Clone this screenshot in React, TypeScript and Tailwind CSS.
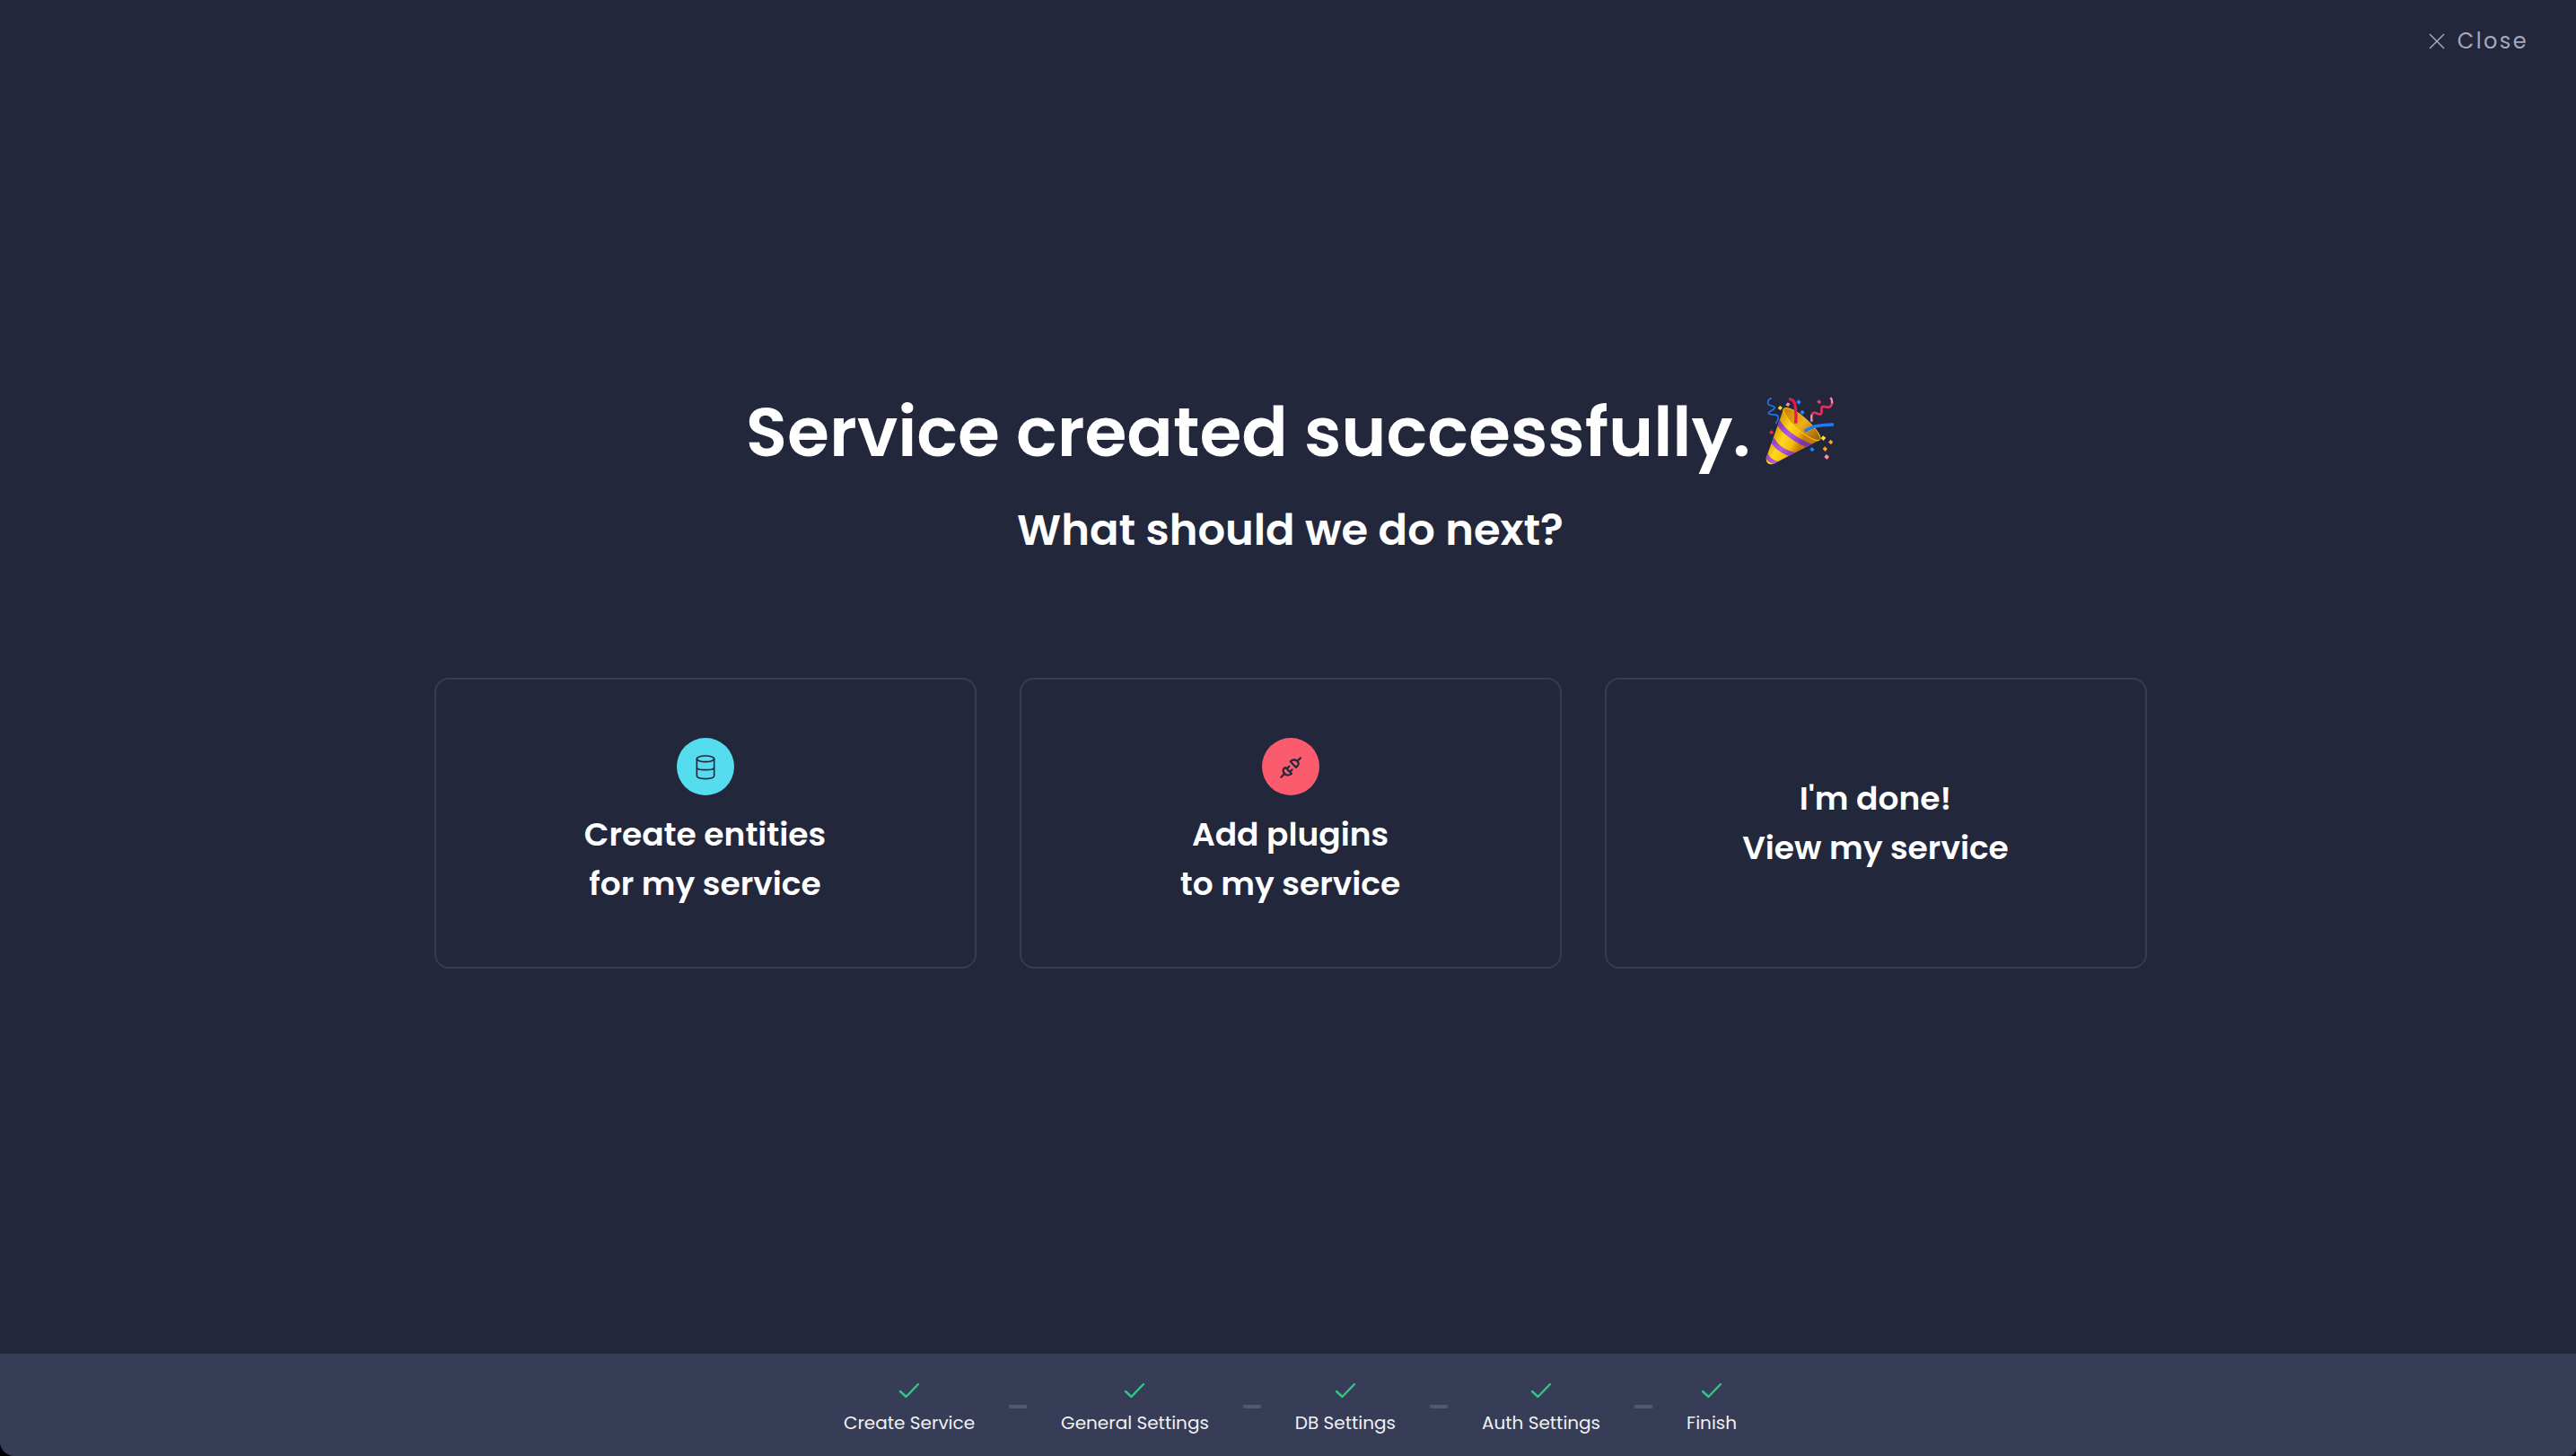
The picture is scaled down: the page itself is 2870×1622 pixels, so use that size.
import React from "react";

function PartyPopper() {
  return (
    <svg role="img" aria-label="Party popper" viewBox="84 63 234 240" className="h-20 w-[78px] shrink-0" fill="none">
      <defs>
        <linearGradient id="cone" x1="105" y1="190" x2="195" y2="240" gradientUnits="userSpaceOnUse">
          <stop offset="0" stopColor="#d99a05" />
          <stop offset="0.4" stopColor="#ffd91a" />
          <stop offset="0.75" stopColor="#f6bd0e" />
          <stop offset="1" stopColor="#c57c05" />
        </linearGradient>
        <linearGradient id="stripe" x1="105" y1="190" x2="195" y2="240" gradientUnits="userSpaceOnUse">
          <stop offset="0" stopColor="#8136b4" />
          <stop offset="0.5" stopColor="#b45ce0" />
          <stop offset="1" stopColor="#7e35aa" />
        </linearGradient>
        <linearGradient id="mouth" x1="150" y1="105" x2="265" y2="205" gradientUnits="userSpaceOnUse">
          <stop offset="0" stopColor="#c98206" />
          <stop offset="0.5" stopColor="#eeb019" />
          <stop offset="1" stopColor="#9c5d08" />
        </linearGradient>
        <clipPath id="coneClip">
          <path d="M147 104 L89 268 Q88 289 108 289 L114 287 L268 208 Q212 190 147 104Z" />
        </clipPath>
      </defs>
      <path d="M147 104 L89 268 Q88 289 108 289 L114 287 L268 208 Q212 190 147 104Z" fill="url(#cone)" />
      <g clipPath="url(#coneClip)" stroke="url(#stripe)">
        <path d="M128 146 Q158 198 246 232" strokeWidth="17" />
        <path d="M108 203 Q128 244 186 258" strokeWidth="17" />
        <path d="M88 254 Q98 280 130 286" strokeWidth="14" />
      </g>
      <path d="M149 102 C163 94 205 118 236 151 C266 181 276 203 267 208 C256 214 212 191 183 160 C155 131 141 108 149 102Z" fill="url(#mouth)" stroke="#ffcf1f" strokeWidth="3" />
      <path d="M165 71 Q184 70 187 97 Q190 120 188 152" stroke="#e5194f" strokeWidth="10" />
      <path d="M218 178 Q240 162 270 159 Q290 156 315 156" stroke="#1f7cf2" strokeWidth="10" />
      <path d="M108 68 C95 70 91 84 99 91 C108 95 119 93 118 100 C115 110 94 111 97 119 C104 126 119 119 127 126 C135 133 126 144 121 153" stroke="#1b76ea" strokeWidth="5" />
      <path d="M304 66 C314 80 309 96 299 98 C290 100 284 92 276 97 C270 104 280 115 271 121 C262 125 252 111 245 118 C239 126 243 136 243 146" stroke="#e5305f" strokeWidth="8" />
      <path d="M305 66 Q312 76 308 85 M241 123 Q239 134 241 146" stroke="#ff9ab8" strokeWidth="5" />
      <g>
        <path d="M135 93 L144 99 L137 108 L128 101Z" fill="#ffe01d" />
        <path d="M161 82 L170 87 L163 96 L154 91Z" fill="#ff86ae" />
        <path d="M197 72 L206 80 L199 89 L190 81Z" fill="#168cff" />
        <path d="M209 107 L218 114 L211 123 L202 116Z" fill="#168cff" />
        <path d="M265 72 L274 80 L267 88 L258 80Z" fill="#e63767" />
        <path d="M106 174 L115 182 L107 190 L99 182Z" fill="#e42752" />
        <path d="M279 193 L289 200 L281 210 L272 202Z" fill="#ffe02a" />
        <path d="M304 206 L313 214 L306 223 L297 215Z" fill="#ff9e1b" />
        <path d="M285 229 L294 237 L287 246 L278 238Z" fill="#ffa20f" />
        <path d="M242 231 L251 239 L243 247 L235 239Z" fill="#168cff" />
        <path d="M290 255 L300 263 L293 273 L283 265Z" fill="#ff8db0" />
      </g>
    </svg>
  );
}

function DatabaseIcon() {
  return (
    <svg viewBox="102 66 192 192" className="size-16" fill="none" stroke="#22273c" strokeWidth="5" aria-hidden="true">
      <ellipse cx="198" cy="136" rx="29" ry="10" />
      <path d="M169 136 V193 C169 206 227 206 227 193 V136 M169 164 C169 176 227 176 227 164" />
    </svg>
  );
}

function PlugIcon() {
  return (
    <svg viewBox="108 66 192 192" className="size-16" fill="none" stroke="#22273c" strokeWidth="6.5" strokeLinecap="round" strokeLinejoin="round" aria-hidden="true">
      <path d="M172 197 L181 188 M187 165 L207 186 Q198 193 188 189 Q179 185 179 175 Q179 168 187 165Z" />
      <path d="M194 166 L199 161 M204 177 L209 172" />
      <path d="M237 133 L228 142 M203 145 L222 165 Q231 158 230 150 Q227 141 217 139 Q208 139 203 145Z" />
    </svg>
  );
}

const cards = [
  { lines: ["Create entities", "for my service"], icon: <DatabaseIcon />, tint: "bg-[#55dcee]" },
  { lines: ["Add plugins", "to my service"], icon: <PlugIcon />, tint: "bg-[#fa5c6e]" },
  { lines: ["I'm done!", "View my service"], icon: null, tint: "" },
];

const steps = ["Create Service", "General Settings", "DB Settings", "Auth Settings", "Finish"];

export default function App() {
  return (
    <div className="bg-black">
      <div className="flex min-h-screen flex-col overflow-hidden rounded-bl-2xl rounded-br-lg bg-[#22273c] font-['Poppins','Inter',sans-serif] text-white">
        <header className="flex justify-end px-[53px] pt-7">
          <button type="button" className="flex items-center gap-[14px] text-2xl leading-9 font-normal tracking-widest text-[#a5a9bb]">
            <svg viewBox="0 0 18 18" className="size-[18px]" fill="none" stroke="currentColor" strokeWidth="1.5" aria-hidden="true">
              <path d="M1 1 L17 17 M17 1 L1 17" />
            </svg>
            Close
          </button>
        </header>

        <main className="flex grow flex-col items-center justify-center gap-4 pb-[68px] pl-[5px]">
          <h1 className="flex items-center gap-4 text-[76px] leading-[114px] font-semibold">
            Service created successfully.
            <PartyPopper />
          </h1>
          <h2 className="text-5xl leading-[72px] font-semibold">What should we do next?</h2>
          <div className="mt-28 grid w-2/3 max-w-[1908px] grid-cols-3 gap-12">
            {cards.map((card) => (
              <button
                type="button"
                key={card.lines[0]}
                className="flex min-h-[324px] flex-col items-center justify-center gap-4 rounded-2xl border-2 border-[#373c56] text-4xl leading-[55px] font-semibold"
              >
                {card.icon && <span className={`rounded-full ${card.tint}`}>{card.icon}</span>}
                <span>
                  {card.lines[0]}
                  <br />
                  {card.lines[1]}
                </span>
              </button>
            ))}
          </div>
        </main>

        <footer className="bg-[#373c57] pt-[26px] pb-[22px] pl-[5px]">
          <ol className="flex items-center justify-center gap-[38px]">
            {steps.map((step, i) => (
              <React.Fragment key={step}>
                {i > 0 && <li aria-hidden="true" className="h-1 w-5 bg-[#525771]" />}
                <li className="flex flex-col items-center gap-1">
                  <svg viewBox="0 0 24 24" className="h-8 w-6" fill="none" stroke="#2ec886" strokeWidth="2.4" strokeLinecap="round" strokeLinejoin="round" aria-hidden="true">
                    <path d="M2 12 L8.500 18 L22 4" />
                  </svg>
                  <span className="text-xl leading-[30px] text-[#f0f1f5]">{step}</span>
                </li>
              </React.Fragment>
            ))}
          </ol>
        </footer>
      </div>
    </div>
  );
}
